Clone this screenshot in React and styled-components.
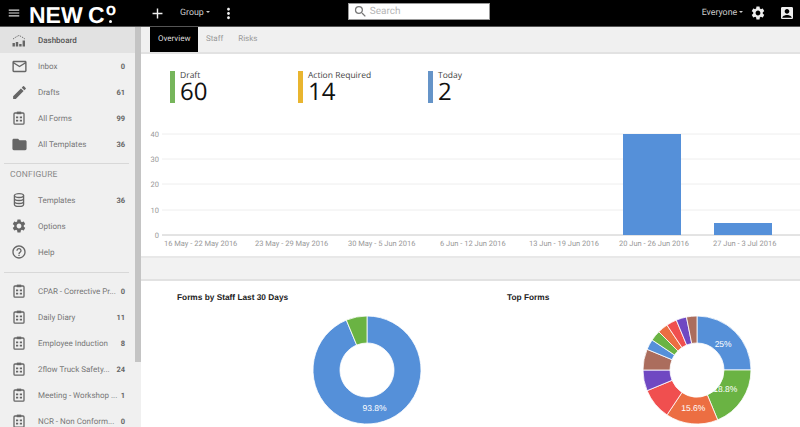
import React from 'react';
import styled, { createGlobalStyle } from 'styled-components';
import { MdMenu, MdAdd, MdMoreVert, MdSearch, MdSettings, MdAccountBox, MdMailOutline, MdEdit, MdFolder, MdHelpOutline } from 'react-icons/md';

const Global = createGlobalStyle`
    html, body { margin: 0; height: 100%; overflow: hidden; background: #fff; }
    body { font-family: Roboto, "Liberation Sans", sans-serif; text-rendering: geometricPrecision; }
    #root { height: 100%; }
`

const Page = styled.div`
    display: flex;
    flex-direction: column;
    height: 427px;
    width: 800px;
    overflow: hidden;
`

const Topbar = styled.header`
    display: flex;
    align-items: center;
    flex: 0 0 27px;
    box-sizing: border-box;
    height: 27px;
    background: #000;
    border-bottom: 1px solid #555;
    color: #ddd;
`

const MenuButton = styled(MdMenu)`
    flex: 0 0 14px;
    width: 14px;
    height: 14px;
    margin-left: 7px;
    color: #ddd;
`

const Logo = styled.div`
    display: flex;
    align-items: flex-start;
    flex: 0 0 91px;
    margin: 3px 0 0 8px;
    color: #fff;
    font: bold 23px/24px "Liberation Sans", sans-serif;
    white-space: nowrap;
`

const LogoWord = styled.span`
    word-spacing: -1px;
`

const LogoMark = styled.span`
    position: relative;
    margin: -3px 0 0 1px;
    font-size: 17px;
    line-height: 20px;

    &::after {
        content: '';
        position: absolute;
        left: 3px;
        top: 20px;
        width: 3px;
        height: 3px;
        border-radius: 50%;
        background: #fff;
    }
`

const TopIcon = styled.span`
    display: flex;
    margin-left: ${(props) => props.left || 0}px;
    font-size: ${(props) => props.size || 16}px;
    color: #eee;
`

const TopMenu = styled.span`
    margin-left: ${(props) => props.left}px;
    font-size: 8.8px;
    color: #ccc;
    white-space: nowrap;

    &::after {
        content: '';
        display: inline-block;
        margin-left: 2px;
        vertical-align: 2px;
        border: 2px solid transparent;
        border-top-color: #ccc;
        border-bottom: 0;
    }
`

const SearchBox = styled.div`
    display: flex;
    align-items: center;
    box-sizing: border-box;
    flex: 0 0 142px;
    height: 17px;
    margin: -3px 0 0 ${(props) => props.left}px;
    padding-left: 4px;
    background: #fff;
    border: 1px solid #999;
    color: #b5b5b5;
    font-size: 10px;
`

const SearchIcon = styled(MdSearch)`
    width: 15px;
    height: 15px;
    margin-right: 2px;
    color: #777;
`

const Body = styled.div`
    display: flex;
    flex: 1;
    min-height: 0;
`

const Sidebar = styled.aside`
    display: flex;
    flex: 0 0 141px;
    background: #f0f0f0;
    overflow: hidden;
`

const NavList = styled.nav`
    flex: 0 0 135px;
    width: 135px;
`

const Track = styled.div`
    flex: 0 0 6px;
    background: #f0f0f0;
`

const Thumb = styled.div`
    height: ${(props) => props.size}px;
    background: #c4c4c4;
`

const NavRow = styled.div`
    display: flex;
    align-items: center;
    height: 26px;
    padding-right: 10px;
    background: ${(props) => (props.active ? '#e2e2e2' : 'transparent')};
    color: ${(props) => (props.active ? '#555' : '#777')};
    font-size: 8px;
    font-weight: ${(props) => (props.active ? 500 : 400)};
`

const NavIcon = styled.span`
    display: flex;
    justify-content: center;
    flex: 0 0 38px;
    font-size: 15px;
    color: #666;
`

const NavLabel = styled.span`
    flex: 1;
    white-space: nowrap;
`

const NavCount = styled.span`
    font-size: 7.5px;
    font-weight: 700;
    color: #666;
`

const Divider = styled.hr`
    margin: ${(props) => props.top}px 6px ${(props) => props.bottom}px 4px;
    border: 0;
    border-top: 1px solid #d8d8d8;
`

const SectionTitle = styled.div`
    height: 23px;
    padding-left: 10px;
    color: #888;
    font-size: 8.5px;
    line-height: 23px;
    letter-spacing: 0.2px;
`

const Content = styled.main`
    display: flex;
    flex-direction: column;
    flex: 1;
    min-width: 0;
`

const Tabs = styled.div`
    display: flex;
    box-sizing: border-box;
    flex: 0 0 26px;
    padding-left: 9px;
    background: #f0f0f0;
    border-bottom: 2px solid #e2e2e2;
`

const Tab = styled.div`
    height: 25px;
    padding: 0 ${(props) => (props.active ? 8 : 7.5)}px;
    background: ${(props) => (props.active ? '#000' : 'transparent')};
    color: ${(props) => (props.active ? '#ddd' : '#999')};
    font-size: 8px;
    line-height: 24px;
`

const Stats = styled.section`
    display: flex;
    flex: 0 0 72px;
    box-sizing: border-box;
    padding: 17px 0 0 29px;
`

const Stat = styled.div`
    display: flex;
    flex: 0 0 ${(props) => props.width}px;
    height: 32px;
`

const StatBar = styled.div`
    flex: 0 0 5px;
    margin-right: 5px;
    background: ${(props) => props.color};
`

const StatLabel = styled.div`
    margin-top: -1px;
    color: #444;
    font: 8.5px/11px "Open Sans", sans-serif;
`

const StatValue = styled.div`
    color: #111;
    font: 24px/21px "Open Sans", sans-serif;
`

const ChartSvg = styled.svg`
    display: block;
    flex: 0 0 130px;
    width: 659px;
    height: 130px;
`

const AxisText = styled.text`
    fill: #999;
    font-size: 7.5px;
`

const Band = styled.div`
    flex: 0 0 25px;
    box-sizing: border-box;
    background: #f2f2f2;
    border-top: 2px solid #e8e8e8;
    border-bottom: 2px solid #e2e2e2;
`

const PieRow = styled.section`
    display: flex;
    flex: 1;
`

const PiePanel = styled.div`
    flex: 0 0 330px;
    box-sizing: border-box;
    padding: 11px 0 0 36px;
`

const PanelTitle = styled.div`
    height: 22px;
    color: #222;
    font: bold 8.3px/11px "Liberation Sans", sans-serif;
`

const DonutSvg = styled.svg`
    display: block;
    width: 112px;
    height: 112px;
    margin-left: 134px;
`

const SliceLabel = styled.text`
    fill: #fff;
    font: 8.5px "Liberation Sans", sans-serif;
    text-anchor: middle;
    dominant-baseline: central;
`

const FormIcon = () => (
    <svg width="12" height="14" viewBox="0 0 12 14" fill="none">
        <rect x="1" y="2" width="10" height="11.2" rx="1" stroke="#666" strokeWidth="1.3" />
        <rect x="3.8" y="0.6" width="4.4" height="2.6" fill="#666" />
        <path d="M3 5.6h2.2v1.6H3zM6.8 5.6H9v1.6H6.8zM3 8.8h2.2v1.6H3zM6.8 8.8H9v1.6H6.8z" fill="#666" />
    </svg>
)

const DashIcon = () => (
    <svg width="14" height="13" viewBox="0 0 14 13" fill="#666">
        <path d="M1 5l3-2 3-1.6 3 1.6 3 2" fill="none" stroke="#666" strokeWidth="0.9" strokeDasharray="1.6 1" />
        <path d="M0.5 9h2.4v3.5H0.5zM3.8 8h2.4v4.5H3.8zM7.2 10h2.4v2.5H7.2zM10.6 6.5H13v6h-2.4z" />
    </svg>
)

const DbIcon = () => (
    <svg width="12" height="14" viewBox="0 0 12 14" fill="none" stroke="#666" strokeWidth="1.3">
        <ellipse cx="6" cy="2.6" rx="4.6" ry="1.9" />
        <path d="M1.4 2.6v8.8c0 1 2 1.9 4.6 1.9s4.6-.9 4.6-1.9V2.6M1.4 5.6c0 1 2 1.9 4.6 1.9s4.6-.9 4.6-1.9M1.4 8.6c0 1 2 1.9 4.6 1.9s4.6-.9 4.6-1.9" />
    </svg>
)

const topNav = [
    { label: 'Dashboard', icon: <DashIcon />, active: true },
    { label: 'Inbox', icon: <MdMailOutline size={17} />, count: 0 },
    { label: 'Drafts', icon: <MdEdit size={17} />, count: 61 },
    { label: 'All Forms', icon: <FormIcon />, count: 99 },
    { label: 'All Templates', icon: <MdFolder size={17} />, count: 36 },
]

const configNav = [
    { label: 'Templates', icon: <DbIcon />, count: 36 },
    { label: 'Options', icon: <MdSettings size={16} /> },
    { label: 'Help', icon: <MdHelpOutline size={16} /> },
]

const formNav = [
    { label: 'CPAR - Corrective Pr...', count: 0 },
    { label: 'Daily Diary', count: 11 },
    { label: 'Employee Induction', count: 8 },
    { label: '2flow Truck Safety...', count: 24 },
    { label: 'Meeting - Workshop ...', count: 1 },
    { label: 'NCR - Non Conform...', count: 0 },
]

const NavItem = ({ label, icon, count, active }) => (
    <NavRow active={active}>
        <NavIcon>{icon}</NavIcon>
        <NavLabel>{label}</NavLabel>
        <NavCount>{count}</NavCount>
    </NavRow>
)

const ticks = [
    { label: '40', y: 8 },
    { label: '30', y: 33 },
    { label: '20', y: 58 },
    { label: '10', y: 84 },
    { label: '0', y: 109 },
]

const weeks = [
    { label: '16 May - 22 May 2016', x: 23 },
    { label: '23 May - 29 May 2016', x: 114 },
    { label: '30 May - 5 Jun 2016', x: 207 },
    { label: '6 Jun - 12 Jun 2016', x: 299 },
    { label: '13 Jun - 19 Jun 2016', x: 388 },
    { label: '20 Jun - 26 Jun 2016', x: 478 },
    { label: '27 Jun - 3 Jul 2016', x: 572 },
]

const BLUE = '#5590d9'
const GREEN = '#6ab343'
const ORANGE = '#ec6e42'
const RED = '#f04f4f'
const PURPLE = '#6f48c2'
const BROWN = '#ab6d5d'

const staffSlices = [
    { value: 30, color: BLUE, label: '93.8%', labelAt: 39 },
    { value: 2, color: GREEN },
]

const formSlices = [
    { value: 8, color: BLUE, label: '25%', labelAt: 37 },
    { value: 6, color: GREEN, label: '18.8%', labelAt: 34 },
    { value: 5, color: ORANGE, label: '15.6%', labelAt: 38 },
    { value: 3, color: RED },
    { value: 2, color: PURPLE },
    { value: 2, color: BROWN },
    { value: 1, color: BLUE },
    { value: 1, color: GREEN },
    { value: 1, color: ORANGE },
    { value: 1, color: RED },
    { value: 1, color: PURPLE },
    { value: 1, color: BROWN },
]

const point = (r, turn) => {
    const a = turn * 2 * Math.PI
    return [56 + r * Math.sin(a), 56 - r * Math.cos(a)]
}

const Donut = ({ slices }) => {
    const total = slices.reduce((sum, s) => sum + s.value, 0)
    let start = 0
    const parts = slices.map((s) => {
        const end = start + s.value / total
        const [x1, y1] = point(54, start)
        const [x2, y2] = point(54, end)
        const [x3, y3] = point(27, end)
        const [x4, y4] = point(27, start)
        const large = end - start > 0.5 ? 1 : 0
        const d = `M${x1} ${y1}A54 54 0 ${large} 1 ${x2} ${y2}L${x3} ${y3}A27 27 0 ${large} 0 ${x4} ${y4}Z`
        const [lx, ly] = point(s.labelAt || 38, (start + end) / 2)
        start = end
        return { ...s, d, lx, ly }
    })
    return (
        <DonutSvg viewBox="0 0 112 112">
            {parts.map((p, i) => (
                <path key={i} d={p.d} fill={p.color} stroke="#fff" strokeWidth="0.8" />
            ))}
            {parts.filter((p) => p.label).map((p) => (
                <SliceLabel key={p.label} x={p.lx} y={p.ly}>{p.label}</SliceLabel>
            ))}
        </DonutSvg>
    )
}

export default function App() {
    return (
        <Page>
            <Global />
            <Topbar>
                <MenuButton />
                <Logo>
                    <LogoWord>NEW C</LogoWord>
                    <LogoMark>o</LogoMark>
                </Logo>
                <TopIcon left={29} size={17}><MdAdd /></TopIcon>
                <TopMenu left={14}>Group</TopMenu>
                <TopIcon left={10} size={17}><MdMoreVert /></TopIcon>
                <SearchBox left={111}>
                    <SearchIcon />
                    Search
                </SearchBox>
                <TopMenu left={212}>Everyone</TopMenu>
                <TopIcon left={7} size={16}><MdSettings /></TopIcon>
                <TopIcon left={13} size={16}><MdAccountBox /></TopIcon>
            </Topbar>
            <Body>
                <Sidebar>
                    <NavList>
                        {topNav.map((item) => <NavItem key={item.label} {...item} />)}
                        <Divider top={6} bottom={0} />
                        <SectionTitle>CONFIGURE</SectionTitle>
                        {configNav.map((item) => <NavItem key={item.label} {...item} />)}
                        <Divider top={7} bottom={5} />
                        {formNav.map((item) => <NavItem key={item.label} icon={<FormIcon />} {...item} />)}
                    </NavList>
                    <Track><Thumb size={335} /></Track>
                </Sidebar>
                <Content>
                    <Tabs>
                        <Tab active>Overview</Tab>
                        <Tab>Staff</Tab>
                        <Tab>Risks</Tab>
                    </Tabs>
                    <Stats>
                        <Stat width={128}>
                            <StatBar color="#76b55b" />
                            <div><StatLabel>Draft</StatLabel><StatValue>60</StatValue></div>
                        </Stat>
                        <Stat width={130}>
                            <StatBar color="#e9b52f" />
                            <div><StatLabel>Action Required</StatLabel><StatValue>14</StatValue></div>
                        </Stat>
                        <Stat width={130}>
                            <StatBar color="#6594c8" />
                            <div><StatLabel>Today</StatLabel><StatValue>2</StatValue></div>
                        </Stat>
                    </Stats>
                    <ChartSvg viewBox="0 0 659 130">
                        {ticks.map((t) => (
                            <g key={t.label}>
                                <line x1="21" x2="659" y1={t.y} y2={t.y} stroke={t.label === '0' ? '#c8c8c8' : '#eeeeee'} />
                                <AxisText x="18" y={t.y + 3} textAnchor="end">{t.label}</AxisText>
                            </g>
                        ))}
                        <rect x="482" y="8" width="58" height="101" fill="#5590d9" />
                        <rect x="573" y="97" width="58" height="12" fill="#5590d9" />
                        {weeks.map((w) => (
                            <AxisText key={w.label} x={w.x} y="119.5">{w.label}</AxisText>
                        ))}
                    </ChartSvg>
                    <Band />
                    <PieRow>
                        <PiePanel>
                            <PanelTitle>Forms by Staff Last 30 Days</PanelTitle>
                            <Donut slices={staffSlices} />
                        </PiePanel>
                        <PiePanel>
                            <PanelTitle>Top Forms</PanelTitle>
                            <Donut slices={formSlices} />
                        </PiePanel>
                    </PieRow>
                </Content>
            </Body>
        </Page>
    );
}
